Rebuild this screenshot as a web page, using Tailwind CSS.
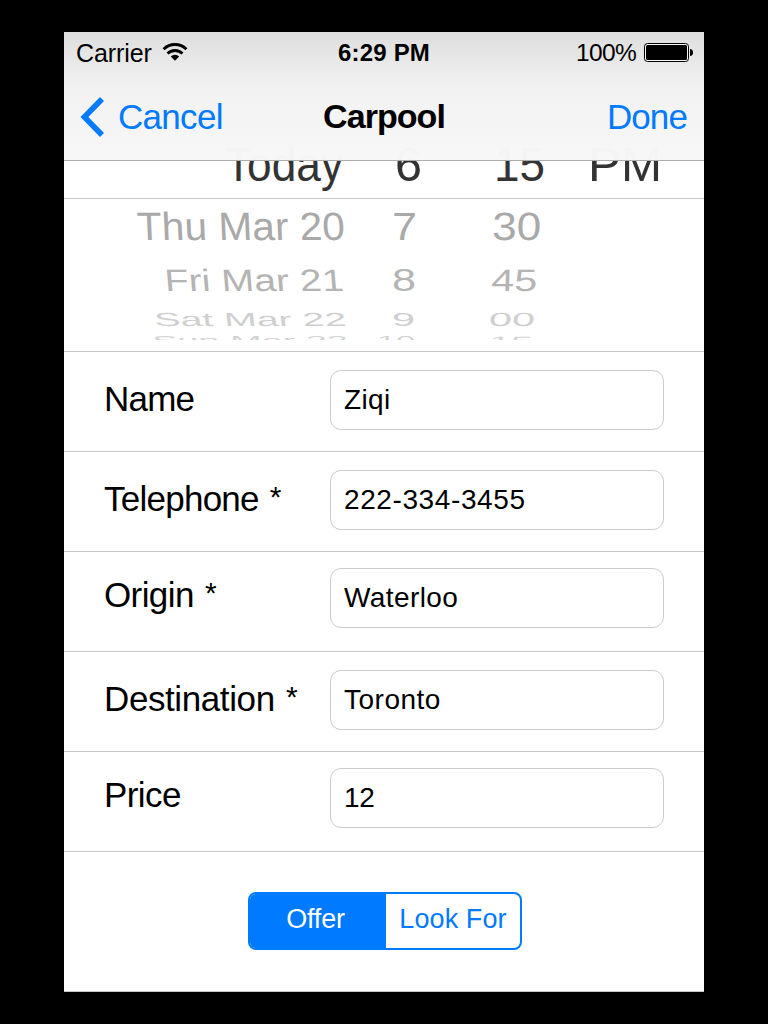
<!DOCTYPE html>
<html lang="en">
<head>
<meta charset="utf-8">
<title>Carpool</title>
<script src="https://cdn.jsdelivr.net/npm/@tailwindcss/browser@4"></script>
</head>
<body class="bg-black w-[768px] h-[1024px] overflow-hidden px-16 pt-8 pb-8 font-['Liberation_Sans',Arial,sans-serif] text-black">
<main class="w-[640px] h-[960px] bg-white flex flex-col overflow-hidden border-b border-[#c8c7cc]">
  <header class="relative z-10 h-[129px] shrink-0 border-b border-[#acacac] bg-linear-to-b from-[#dedede] via-[#f2f2f2] via-45% to-[#f7f7f7fb]">
    <div class="grid grid-cols-3 h-[42px] leading-[42px] text-[25px]">
      <div class="flex pl-3 gap-[11px]">
        <span class="tracking-[-0.1px]">Carrier</span>
        <svg class="w-[26px] h-[20px] mt-[10px] -ml-px" viewBox="0 0 26 20" fill="none" stroke="#000" stroke-width="2.8"><path d="M1.6 7.2A16.2 16.2 0 0 1 24.4 7.2"/><path d="M5.5 11.6A10.6 10.6 0 0 1 20.5 11.6"/><path d="M13 18.8L8.8 14.4A6 6 0 0 1 17.2 14.4Z" fill="#000" stroke="none"/></svg>
      </div>
      <div class="text-center font-bold text-[24px] tracking-[0.2px]">6:29 PM</div>
      <div class="flex justify-end pr-[11px] gap-[8px]">
        <span class="text-[24.500px] tracking-[-0.7px]">100%</span>
        <svg class="w-[49px] h-[20px] mt-[10px]" viewBox="0 0 49 20"><rect x=".5" y="1.5" width="44" height="18" rx="3" fill="#f5f5f5" stroke="#000"/><rect x="2" y="3" width="41" height="15" rx="1.5"/><path d="M46 7q3 .4 3 3.500t-3 3.500z"/></svg>
      </div>
    </div>
    <div class="grid grid-cols-3 h-[86px] leading-[85px] text-[35px]">
      <div class="flex pl-4 gap-[12px] text-[#007aff]">
        <svg class="w-[26px] h-[40px] mt-[22.500px]" viewBox="0 0 26 40" fill="none" stroke="#007aff" stroke-width="5.600"><path d="M22 2L4.400 20L22 38"/></svg>
        <span class="tracking-[-0.7px]">Cancel</span>
      </div>
      <div class="text-center font-bold text-[34px] tracking-[-0.95px]">Carpool</div>
      <div class="text-right pr-[17px] text-[#007aff] tracking-[-0.9px]">Done</div>
    </div>
  </header>

  <section class="h-[191px] shrink-0 border-b border-[#c8c7cc]">
    <svg class="block w-[640px] h-[190px] overflow-visible" viewBox="64 161 640 190" font-family="Liberation Sans, Arial, sans-serif">
      <defs><clipPath id="drum"><rect x="64" y="130" width="640" height="210"/></clipPath></defs>
      <path d="M64 198.500H704" stroke="#c8c8c8"/>
      <g font-size="48" fill="#333">
        <text x="225" y="180.500" textLength="118" lengthAdjust="spacingAndGlyphs">Today</text>
        <text x="395" y="180.500" textLength="27" lengthAdjust="spacingAndGlyphs">6</text>
        <text x="494" y="180.500" textLength="51" lengthAdjust="spacingAndGlyphs">15</text>
        <text x="588" y="180.500" textLength="74" lengthAdjust="spacingAndGlyphs">PM</text>
      </g>
      <g font-size="39.500" fill="#a9a9a9">
        <text transform="translate(137.500 239.500) skewX(2.500)" textLength="208" lengthAdjust="spacingAndGlyphs">Thu Mar 20</text>
        <text transform="translate(392 239.500)" textLength="25" lengthAdjust="spacingAndGlyphs">7</text>
        <text transform="translate(492 239.500) skewX(-1)" textLength="49" lengthAdjust="spacingAndGlyphs">30</text>
      </g>
      <g font-size="31" fill="#b4b4b4">
        <text transform="translate(165.500 290.500) skewX(5)" textLength="179" lengthAdjust="spacingAndGlyphs">Fri Mar 21</text>
        <text transform="translate(392 290.500)" textLength="24" lengthAdjust="spacingAndGlyphs">8</text>
        <text transform="translate(491 290.500) skewX(-2)" textLength="46" lengthAdjust="spacingAndGlyphs">45</text>
      </g>
      <g font-size="19" fill="#cfcfcf">
        <text transform="translate(155 325.500) skewX(7)" textLength="192" lengthAdjust="spacingAndGlyphs">Sat Mar 22</text>
        <text transform="translate(392 325.500)" textLength="23" lengthAdjust="spacingAndGlyphs">9</text>
        <text transform="translate(488.500 325.500) skewX(-5)" textLength="46" lengthAdjust="spacingAndGlyphs">00</text>
      </g>
      <g font-size="12" fill="#d3d3d3" clip-path="url(#drum)">
        <text transform="translate(152 344.500)" textLength="196" lengthAdjust="spacingAndGlyphs">Sun Mar 23</text>
        <text transform="translate(377 344.500)" textLength="38" lengthAdjust="spacingAndGlyphs">10</text>
        <text transform="translate(488 344.500) skewX(-10)" textLength="44" lengthAdjust="spacingAndGlyphs">15</text>
      </g>
    </svg>
  </section>

  <section class="text-[35px] leading-[41px]">
    <div class="flex h-[100px] border-b border-[#c8c7cc] pl-10">
      <div class="w-[226px] pt-[26px] tracking-[-0.8px]">Name</div>
      <div class="mt-[18px] w-[334px] h-[60px] rounded-[11px] border border-[#cccccc] pl-[13px] text-[28px] leading-[57px] tracking-[0.4px]">Ziqi</div>
    </div>
    <div class="flex h-[100px] border-b border-[#c8c7cc] pl-10">
      <div class="w-[226px] pt-[26px] tracking-[-0.75px]">Telephone <span class="text-[30px] relative -top-1 left-[2px]">*</span></div>
      <div class="mt-[18px] w-[334px] h-[60px] rounded-[11px] border border-[#cccccc] pl-[13px] text-[28px] leading-[57px] tracking-[0.6px]">222-334-3455</div>
    </div>
    <div class="flex h-[100px] border-b border-[#c8c7cc] pl-10">
      <div class="w-[226px] pt-[22px] tracking-[-0.6px]">Origin <span class="text-[30px] relative -top-1 left-[2px]">*</span></div>
      <div class="mt-[16px] w-[334px] h-[60px] rounded-[11px] border border-[#cccccc] pl-[13px] text-[28px] leading-[57px] tracking-[0.4px]">Waterloo</div>
    </div>
    <div class="flex h-[100px] border-b border-[#c8c7cc] pl-10">
      <div class="w-[226px] pt-[26px] tracking-[-0.4px]">Destination <span class="text-[30px] relative -top-1 left-[2px]">*</span></div>
      <div class="mt-[18px] w-[334px] h-[60px] rounded-[11px] border border-[#cccccc] pl-[13px] text-[28px] leading-[57px] tracking-[0.5px]">Toronto</div>
    </div>
    <div class="flex h-[100px] border-b border-[#c8c7cc] pl-10">
      <div class="w-[226px] pt-[22px] tracking-[-0.6px]">Price</div>
      <div class="mt-[16px] w-[334px] h-[60px] rounded-[11px] border border-[#cccccc] pl-[13px] text-[28px] leading-[57px] tracking-[-0.3px]">12</div>
    </div>
  </section>

  <div class="mt-10 ml-[184px] w-[274px] h-[58px] shrink-0 rounded-lg border-2 border-[#007aff] flex overflow-hidden text-[27px] leading-[50px] text-center">
    <div class="w-[136px] bg-[#007aff] text-white pr-[5px] tracking-[-0.2px]">Offer</div>
    <div class="flex-1 text-[#007aff] tracking-[0.1px]">Look For</div>
  </div>
</main>
</body>
</html>
